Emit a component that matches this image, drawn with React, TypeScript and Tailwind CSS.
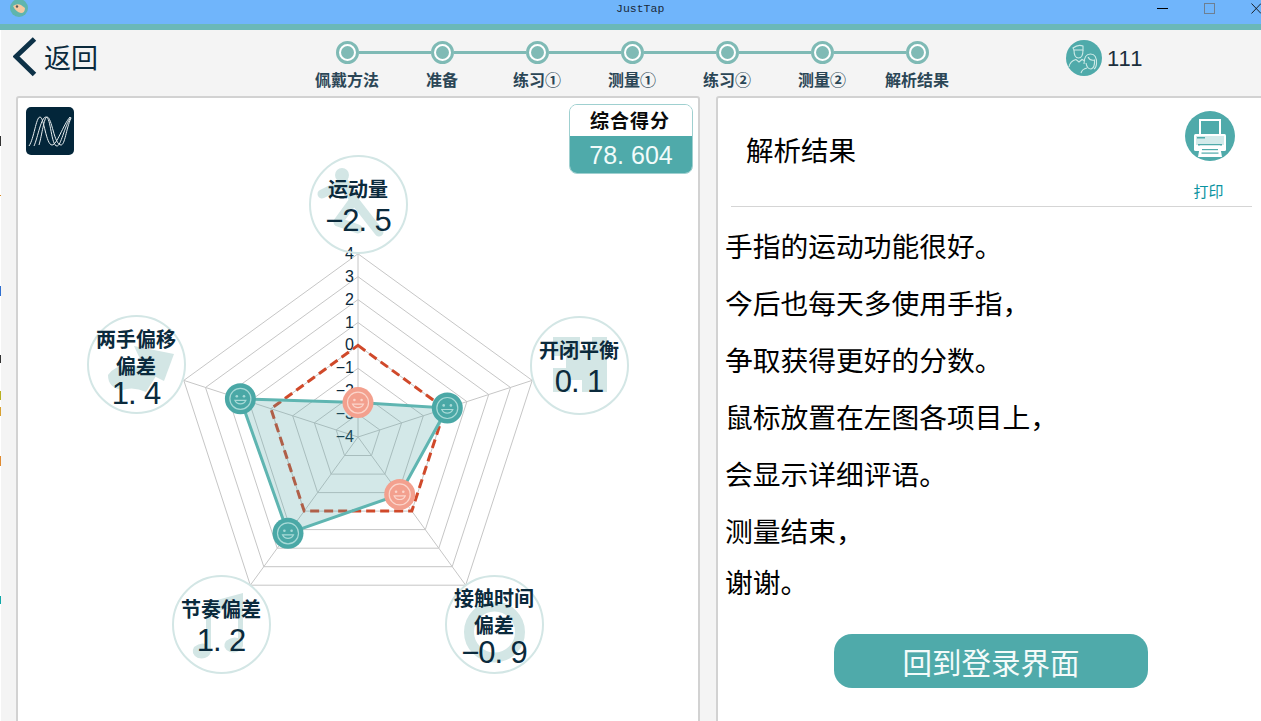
import React from 'react';

const CJK = "font-['Noto_Sans_CJK_SC','Liberation_Sans',sans-serif]";
const MONO = "font-['Liberation_Mono','Noto_Sans_CJK_SC',monospace]";
const SANS = "font-['Liberation_Sans','Noto_Sans_CJK_SC',sans-serif]";

const STEPS = ['佩戴方法', '准备', '练习①', '测量①', '练习②', '测量②', '解析结果'];

const LINES = [
  '手指的运动功能很好。',
  '今后也每天多使用手指，',
  '争取获得更好的分数。',
  '鼠标放置在左图各项目上，',
  '会显示详细评语。',
];

const CX = 358;
const CY = 437;
const UNIT = 22.9;

// score per axis, clockwise from the top
const SCORES = [-2.5, 0.1, -0.9, 1.2, 1.4];

const BUBBLES = [
  { x: 358, y: 204, lines: ['运动量'], value: '−2.5', shift: 3 },
  { x: 579, y: 365, lines: ['开闭平衡'], value: '0.1', shift: 3 },
  { x: 494, y: 624, lines: ['接触时间', '偏差'], value: '−0.9', shift: 2 },
  { x: 221, y: 624, lines: ['节奏偏差'], value: '1.2', shift: 3 },
  { x: 136, y: 364, lines: ['两手偏移', '偏差'], value: '1.4', shift: 3 },
];

function polar(axis: number, score: number) {
  const r = (score + 4) * UNIT;
  const a = (axis * 2 * Math.PI) / 5;
  return [CX + r * Math.sin(a), CY - r * Math.cos(a)];
}

function ring(score: number | number[]) {
  return [0, 1, 2, 3, 4]
    .map((i) => polar(i, Array.isArray(score) ? score[i] : score).map((n) => n.toFixed(1)).join(','))
    .join(' ');
}

// the app's number font has a full-width period
function Num({ value, dot }: { value: string; dot: string }) {
  const [a, b] = value.split('.');
  return (
    <>
      {a}
      <span className={`inline-block ${dot}`}>.</span>
      {b}
    </>
  );
}

function Smile({ x, y, bad }: { x: number; y: number; bad?: boolean }) {
  const bg = bad ? '#f3a08e' : '#4aa8a6';
  const fg = bad ? '#fbd5cb' : '#a8dad7';
  return (
    <g transform={`translate(${x.toFixed(1)} ${y.toFixed(1)})`}>
      <circle r="15.5" fill={bg} />
      <circle r="10.5" fill="none" stroke={fg} strokeWidth="1.2" />
      <circle cx="-3.6" cy="-2.6" r="1.3" fill={fg} />
      <circle cx="3.6" cy="-2.6" r="1.3" fill={fg} />
      <path d="M-5.5 1.5 A6 6 0 0 0 5.5 1.5 Z" fill="none" stroke={fg} strokeWidth="1.2" />
    </g>
  );
}

function Radar() {
  const pts = SCORES.map((s, i) => polar(i, s));
  return (
    <svg className="absolute left-0 top-0" width="680" height="623" viewBox="18 98 680 623">
      {/* faint pictures behind the bubble text */}
      <g fill="#d3e6e5" stroke="none">
        {/* runner */}
        <g fill="none" stroke="#d3e6e5" strokeWidth="9" strokeLinecap="round" strokeLinejoin="round">
          <path d="M344 182 L354 200 L379 232" />
          <path d="M342 184 L322 194" />
          <path d="M354 200 L338 222 L358 229" />
        </g>
        <circle cx="342" cy="175" r="7" />
        {/* handshake */}
        <path d="M134 346 L174 354 L164 381 L146 372 Z" />
        <path d="M108 375 Q118 362 136 366 L156 376 L146 392 Q134 386 122 390 Q108 388 108 375 Z" />
        {/* note */}
        <path d="M206 603 L243 593 L243 646 Q240 654 230 652 Q221 648 226 641 Q232 636 238 638 L238 606 L211 613 L211 652 Q208 660 198 658 Q190 654 194 647 Q200 642 206 644 Z" />
        {/* puzzle */}
        <path d="M553 337 H580 V350 H592 V337 H607 V392 H582 V380 H570 V392 H553 V368 H566 V356 H553 Z" />
      </g>
      <circle cx="494.5" cy="632" r="25.5" fill="none" stroke="#d3e6e5" strokeWidth="10" />

      {/* web */}
      <g fill="none" stroke="#c6c6c6" strokeWidth="1">
        {[-3, -2, -1, 0, 1, 2, 3, 4].map((s) => (
          <polygon key={s} points={ring(s)} />
        ))}
        {[0, 1, 2, 3, 4].map((i) => {
          const [x, y] = polar(i, 4);
          return <line key={i} x1={CX} y1={CY} x2={x} y2={y} />;
        })}
      </g>

      {/* scale */}
      <g fontFamily="Liberation Sans, sans-serif" fontSize="16" fill="#0b2a3c" textAnchor="end">
        {[4, 3, 2, 1, 0, -1, -2, -3, -4].map((s) => (
          <text key={s} x="354" y={CY - (s + 4) * UNIT + 5}>
            {s < 0 ? `−${-s}` : s}
          </text>
        ))}
      </g>

      <polygon points={ring(0)} fill="none" stroke="#d0492a" strokeWidth="3" strokeDasharray="9 5" />
      <polygon points={ring(SCORES)} fill="#4fa5a2" fillOpacity="0.25" stroke="#5fb5b1" strokeWidth="3" />

      <Smile x={pts[0][0]} y={pts[0][1]} bad />
      <Smile x={pts[1][0]} y={pts[1][1]} />
      <Smile x={pts[2][0]} y={pts[2][1]} bad />
      <Smile x={pts[3][0]} y={pts[3][1]} />
      <Smile x={pts[4][0]} y={pts[4][1]} />
    </svg>
  );
}

function Bubble({ x, y, lines, value, shift }: (typeof BUBBLES)[number]) {
  return (
    <div
      className="absolute flex h-[99px] w-[99px] flex-col items-center justify-center rounded-full border-2 border-[#d3e6e5] text-[#0b2a3c]"
      style={{ left: x - 49.5 - 18, top: y - 49.5 - 98, paddingTop: shift * 2 }}
    >
      {lines.map((l) => (
        <div key={l} className={`${CJK} whitespace-nowrap text-[20px] font-bold leading-[27px]`}>
          {l}
        </div>
      ))}
      <div className={`${SANS} whitespace-nowrap text-[31px] tracking-[-1px] ${lines.length > 1 ? 'leading-[30px]' : 'leading-[38px]'}`}>
        <Num value={value} dot="w-[16px]" />
      </div>
    </div>
  );
}

function Logo() {
  return (
    <svg width="48" height="48" viewBox="0 0 48 48" className="rounded-[5px] bg-[#03263a]">
      <g fill="none" stroke="#e8eef0" strokeWidth="1">
        <path d="M3 39 C8 32 10 10 14 10 C18 10 20 38 26 38 C31 38 37 18 44 10" />
        <path d="M8 39 C12 30 15 10 20 10 C25 10 25 39 31 39 C35 39 38 20 45 10" />
        <path d="M13 38 C16 28 18 10 21 10 C26 10 28 38 35 38 C39 38 40 22 45 11" />
      </g>
    </svg>
  );
}

function Avatar() {
  return (
    <svg width="36" height="36" viewBox="0 0 36 36">
      <circle cx="18" cy="18" r="18" fill="#4faaaa" />
      <g fill="none" stroke="#cdeae7" strokeWidth="1.1">
        <path d="M7 8 Q12 4 17 6 L17 10 L8 10 Z" />
        <path d="M8 10 Q8 18 12.5 18 Q17 18 17 10" />
        <path d="M3 27 Q4 21 10 19.5 L13 22 L16 19.5 L19 21" />
        <path d="M18 24 Q18 14 24.5 14 Q31 14 30.5 24 Q30 28 28 29" />
        <path d="M20 23 Q21 29 25 29 Q29 28 28.5 20 Q24 21 22 17" />
        <path d="M15 33 Q16 29 21 28" />
      </g>
    </svg>
  );
}

function Printer() {
  return (
    <svg width="50" height="50" viewBox="0 0 50 50">
      <circle cx="25" cy="25" r="25" fill="#4faaaa" />
      <rect x="15" y="9" width="20" height="17" fill="none" stroke="#fff" strokeWidth="2" />
      <rect x="9" y="23" width="32" height="17" rx="1.5" fill="#fff" />
      <rect x="11" y="25" width="28" height="9" fill="#4faaaa" fillOpacity="0.25" />
      <rect x="12" y="26" width="8" height="1.5" fill="#4faaaa" />
      <rect x="13" y="33" width="24" height="1.5" fill="#4faaaa" />
      <path d="M15 34.5 H35 L37 46 H13 Z" fill="#fff" />
      <rect x="17" y="38" width="16" height="1.2" fill="#4faaaa" />
      <rect x="16.5" y="41.5" width="17" height="1.2" fill="#4faaaa" />
    </svg>
  );
}

export default function App() {
  return (
    <div className={`relative h-[721px] w-[1261px] overflow-hidden bg-[#f4f4f4] ${CJK}`}>
      {/* title bar */}
      <div className="flex h-6 items-start bg-[#70b5fb] pl-[10px]">
        <svg width="18" height="18" viewBox="0 0 18 18">
          <circle cx="9" cy="8" r="9" fill="#5fb5ad" />
          <path d="M3 6 Q7 3 11 5 L15 8 Q15 13 11 13 Q6 12 3 6 Z" fill="#f5c9a0" />
          <circle cx="7" cy="6.5" r="1.2" fill="#555" />
        </svg>
        <span className={`${MONO} ml-[588px] text-[11.5px] leading-[18px] text-[#1a2a3a]`}>JustTap</span>
        <div className="ml-auto flex items-start gap-9 pt-[3px]">
          <div className="mt-[5px] h-px w-[11px] bg-black" />
          <div className="h-[11px] w-[11px] border border-[#6d7f92]" />
          <svg width="10" height="11" viewBox="0 0 10 11">
            <path d="M0.5 0.5 L10 10.5 M10 0.5 L0.5 10.5" stroke="#111" strokeWidth="0.9" fill="none" />
          </svg>
        </div>
      </div>
      <div className="h-1.5 bg-[#6ab8b8]" />

      {/* scraps of desktop showing at the window edge */}
      <div className="absolute bottom-0 left-0 top-[30px] w-px bg-white" />
      <div className="absolute left-0 top-[136px] h-[10px] w-px bg-[#333]" />
      <div className="absolute left-0 top-[195px] h-px w-px bg-[#d98a20]" />
      <div className="absolute left-0 top-[286px] h-[10px] w-px bg-[#2f6fd0]" />
      <div className="absolute left-0 top-[355px] h-[8px] w-px bg-[#333]" />
      <div className="absolute left-0 top-[391px] h-[9px] w-px bg-[#b8b020]" />
      <div className="absolute left-0 top-[407px] h-[9px] w-px bg-[#d8a030]" />
      <div className="absolute left-0 top-[456px] h-[10px] w-px bg-[#e08a30]" />
      <div className="absolute left-0 top-[596px] h-[8px] w-px bg-[#10a8a8]" />

      {/* header */}
      <div className="grid h-[66px] grid-cols-[299.5px_665px_1fr]">
        <div className="flex items-start pl-[13px] pt-[7px]">
          <svg width="25" height="40" viewBox="0 0 25 40">
            <path d="M21.5 2 L3 19.5 L21.5 37.5" fill="none" stroke="#0d3147" strokeWidth="5" />
          </svg>
          <span className="ml-[6px] text-[27px] leading-[40px] text-[#0b2a3c]">返回</span>
        </div>

        <div className="grid grid-cols-7 pt-[11px]">
          {STEPS.map((s, i) => (
            <div key={s} className="flex flex-col items-center">
              <div className="flex w-full items-center">
                <div className={`h-[3px] flex-1 ${i === 0 ? '' : 'bg-[#7fbab5]'}`} />
                <div className="flex h-[23px] w-[23px] items-center justify-center rounded-full border-[3px] border-[#7fbab5] bg-white">
                  <div className="h-[13px] w-[13px] rounded-full bg-[#7fbab5]" />
                </div>
                <div className={`h-[3px] flex-1 ${i === 6 ? '' : 'bg-[#7fbab5]'}`} />
              </div>
              <div className="mt-[3px] whitespace-nowrap text-[16px] font-bold leading-[24px] text-[#2b4656]">{s}</div>
            </div>
          ))}
        </div>

        <div className="flex items-start pl-[101.5px] pt-[10px]">
          <Avatar />
          <span className={`${SANS} ml-[5px] text-[22px] leading-[38px] tracking-[1px] text-[#1c2f3d]`}>111</span>
        </div>
      </div>

      {/* panels */}
      <div className="flex gap-4 pl-4">
        <div className="relative h-[640px] w-[684px] shrink-0 rounded-t-[3px] border-2 border-[#d2d2d2] bg-white">
          <Radar />
          {BUBBLES.map((b) => (
            <Bubble key={b.lines[0]} {...b} />
          ))}
          <div className="relative flex items-start justify-between pl-2 pr-[5px] pt-[6px]">
            <div className="pt-[3px]">
              <Logo />
            </div>
            <div className="w-[124px] overflow-hidden rounded-lg border border-[#9fd0d0]">
              <div className="flex h-[31px] items-center justify-center bg-white pr-[2px] text-[19px] font-bold tracking-[1px] text-[#0a0a0a]">
                综合得分
              </div>
              <div className={`${SANS} flex h-[37px] items-center justify-center bg-[#4faaaa] pt-[2px] text-[25px] text-[#f2fbfa]`}>
                <Num value="78.604" dot="w-[14px]" />
              </div>
            </div>
          </div>
        </div>

        <div className="h-[640px] w-[560px] shrink-0 rounded-t-[3px] border-2 border-[#d2d2d2] bg-white">
          <div className="ml-[13px] flex h-[109px] w-[521px] items-start justify-between border-b border-[#d5d5d5]">
            <span className="ml-[15px] mt-[31px] text-[27.5px] leading-[40px] text-black">解析结果</span>
            <div className="mr-[17px] mt-[13px] flex w-[50px] flex-col items-center">
              <Printer />
              <span className="mr-[3px] mt-[19px] whitespace-nowrap text-[15px] leading-[22px] text-[#0a93a0]">打印</span>
            </div>
          </div>
          <div className="ml-[7px] mt-[10px] text-[27.75px] text-black">
            {LINES.map((l) => (
              <div key={l} className="h-[57px] leading-[57px]">
                {l}
              </div>
            ))}
            <div className="h-[54px] leading-[57px]">测量结束，</div>
            <div className="h-[50px] leading-[50px]">谢谢。</div>
          </div>
          <div className="ml-[116px] mt-[28px] flex h-[54px] w-[314px] items-center justify-center rounded-[18px] bg-[#4faaaa] text-[29.5px] text-[#f4fbfa]">
            回到登录界面
          </div>
        </div>
      </div>
    </div>
  );
}
